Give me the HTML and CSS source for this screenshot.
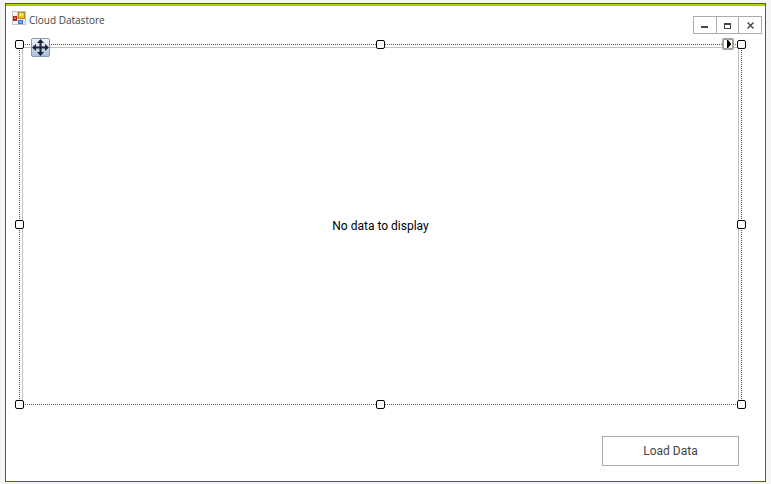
FILE: index.html
```html
<!DOCTYPE html>
<html lang="en">
<head>
<meta charset="utf-8">
<title>Cloud Datastore</title>
<link rel="stylesheet" href="styles.css">
</head>
<body>
<main class="window">
  <header class="titlebar">
    <svg class="app-icon" width="14" height="14" viewBox="0 0 14 14" aria-hidden="true" shape-rendering="crispEdges">
      <rect width="14" height="14" fill="#c4c4c4"/>
      <path d="M1 1h4v4H1zM1 10h4v3H1z" fill="#f4f4f4"/>
      <rect x="5" y="8" width="8" height="5" fill="#e8eef8"/>
      <rect x="1" y="5" width="4" height="5" fill="#b3261e"/>
      <rect x="2" y="6" width="2" height="2" fill="#e06a5c"/>
      <rect x="6" y="1" width="7" height="7" fill="#b98a10"/>
      <rect x="7" y="2" width="5" height="5" fill="#f3bd2c"/>
      <rect x="7" y="2" width="4" height="3" fill="#fbdc74"/>
      <rect x="6" y="9" width="5" height="4" fill="#3e76d2"/>
      <rect x="7" y="10" width="3" height="2" fill="#7fabf0"/>
    </svg>
    <h1 class="title">Cloud Datastore</h1>
    <div class="window-buttons">
      <button type="button" aria-label="Minimize"><svg width="7" height="7" viewBox="0 0 7 7" shape-rendering="crispEdges"><path d="M0 4h7v2H0z"/></svg></button>
      <button type="button" aria-label="Maximize"><svg width="7" height="7" viewBox="0 0 7 7" shape-rendering="crispEdges"><path fill-rule="evenodd" d="M0 1h7v6H0zM1 3v3h5V3z"/></svg></button>
      <button type="button" aria-label="Close"><svg width="7" height="7" viewBox="0 0 7 7"><path d="M.5.500l6 6M6.500.500l-6 6" stroke="#444" stroke-width="1.400"/></svg></button>
    </div>
  </header>
  <section class="selection">
    <div class="grid-view">No data to display</div>
    <span class="handle top left"></span>
    <span class="handle top center"></span>
    <span class="handle top right"></span>
    <span class="handle middle left"></span>
    <span class="handle middle right"></span>
    <span class="handle bottom left"></span>
    <span class="handle bottom center"></span>
    <span class="handle bottom right"></span>
    <button class="move" type="button" aria-label="Move">
      <svg width="19" height="19" viewBox="0 0 19 19">
        <defs><linearGradient id="face" x2="0" y2="1"><stop stop-color="#f3f7fc"/><stop offset=".5" stop-color="#cfdaea"/><stop offset="1" stop-color="#a9bcd6"/></linearGradient></defs>
        <rect x=".5" y=".5" width="18" height="18" rx="1.500" fill="url(#face)" stroke="#8797b0"/>
        <path d="M9.500 1l3.500 4h-2.500v3.500H14V6l4 3.500-4 3.500v-2.500h-3.500V14H13l-3.500 4L6 14h2.500v-3.500H5V13L1 9.500 5 6v2.500h3.500V5H6z" fill="#1b2536"/>
      </svg>
    </button>
    <button class="tasks" type="button" aria-label="Tasks">
      <svg width="12" height="12" viewBox="0 0 12 12"><rect x="1" y="1" width="10" height="10" rx="1" fill="#fff" stroke="#a3a29a" stroke-width="2"/><path d="M5 2v8h1l3-3.500v-1L6 2z"/></svg>
    </button>
  </section>
  <footer class="actions">
    <button class="load" type="button">Load Data</button>
  </footer>
</main>
</body>
</html>
```
FILE: styles.css
```css
* {
  box-sizing: border-box;
}

body {
  margin: 0;
  padding: 3px 5px 2px;
  min-height: 100vh;
  display: flex;
  background: #f5f5f5;
  font-family: Roboto, "Open Sans", sans-serif;
  font-size: 12px;
  color: #000;
}

button {
  padding: 0;
  font: inherit;
  color: #444;
}

svg {
  display: block;
}

.window {
  flex: 1;
  display: flex;
  flex-direction: column;
  background: #fff;
  border: 1px solid #56640f;
  box-shadow: inset 0 2px #a5d400;
}

.titlebar {
  display: flex;
  align-items: flex-start;
  height: 40px;
  padding: 7px 3px 0 6px;
}

.title {
  flex: 1;
  margin: 2px 0 0 3px;
  font-family: "Open Sans", sans-serif;
  font-size: 10px;
  line-height: 14px;
  font-weight: 400;
  color: #444;
}

.window-buttons {
  display: grid;
  grid-template-columns: repeat(3, 1fr);
  gap: 1px;
  width: 69px;
  height: 18px;
  margin-top: 5px;
  padding: 1px;
  background: #ababab;
}

.window-buttons button {
  display: grid;
  place-items: center;
  border: 0;
  background: #fff;
  fill: #444;
}

.selection {
  position: relative;
  flex: 1;
  display: flex;
  margin: 0 23px 0 13px;
  padding: 2px 2px 0;
  border: 1px dotted #555;
}

.grid-view {
  flex: 1;
  display: grid;
  place-items: center;
  border: 1px solid #c3c3b8;
  border-bottom: 0;
}

.handle {
  position: absolute;
  width: 9px;
  height: 9px;
  border: 1px solid #000;
  border-radius: 2px;
  background: #fff;
}

.top { top: -5px; }
.middle { top: calc(50% - 5px); }
.bottom { bottom: -5px; }
.left { left: -5px; }
.center { left: calc(50% - 5px); }
.right { right: -5px; }

.move,
.tasks {
  position: absolute;
  border: 0;
  background: none;
}

.move {
  top: -7px;
  left: 11px;
}

.tasks {
  top: -7px;
  right: 7px;
}

.actions {
  display: flex;
  justify-content: flex-end;
  padding: 31px 26px 15px;
}

.load {
  width: 137px;
  height: 30px;
  border: 1px solid #ababab;
  background: #fff;
}
```
